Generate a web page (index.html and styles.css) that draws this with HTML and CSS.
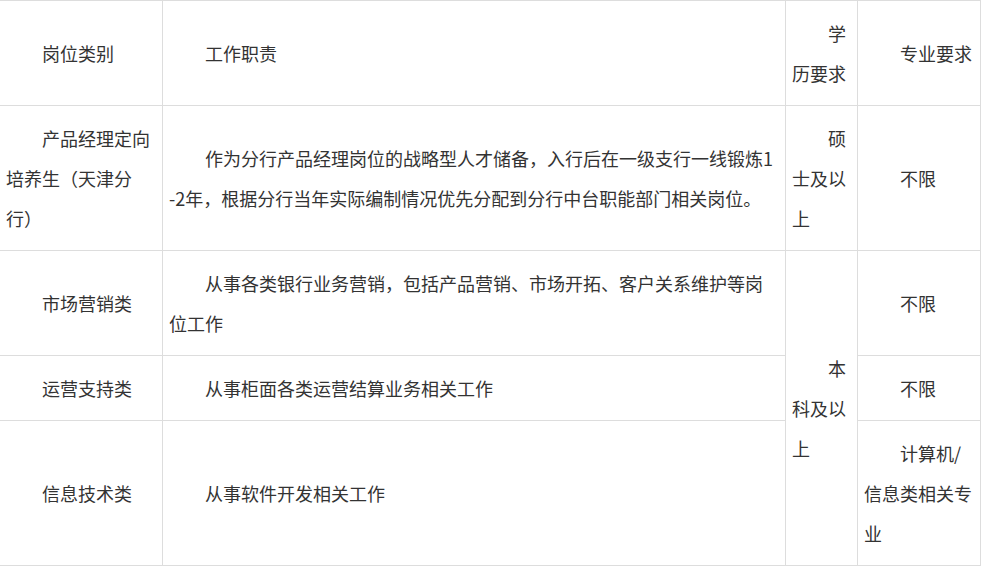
FILE: index.html
```html
<!DOCTYPE html>
<html lang="zh-CN">
<head>
    <meta charset="UTF-8">
    <meta name="viewport" content="width=device-width, initial-scale=1.0">
    <title>岗位信息</title>
    <link rel="stylesheet" href="styles.css">
</head>
<body>
    <table class="job-table">
        <colgroup>
            <col class="col-type">
            <col class="col-duty">
            <col class="col-edu">
            <col class="col-major">
        </colgroup>
        <tr>
            <td><p>岗位类别</p></td>
            <td><p>工作职责</p></td>
            <td><p>学历要求</p></td>
            <td><p>专业要求</p></td>
        </tr>
        <tr>
            <td><p>产品经理定向培养生（天津分行）</p></td>
            <td><p>作为分行产品经理岗位的战略型人才储备，入行后在一级支行一线锻炼1-2年，根据分行当年实际编制情况优先分配到分行中台职能部门相关岗位。</p></td>
            <td><p>硕士及以上</p></td>
            <td><p>不限</p></td>
        </tr>
        <tr>
            <td><p>市场营销类</p></td>
            <td><p>从事各类银行业务营销，包括产品营销、市场开拓、客户关系维护等岗位工作</p></td>
            <td rowspan="3"><p>本科及以上</p></td>
            <td><p>不限</p></td>
        </tr>
        <tr>
            <td><p>运营支持类</p></td>
            <td><p>从事柜面各类运营结算业务相关工作</p></td>
            <td><p>不限</p></td>
        </tr>
        <tr>
            <td><p>信息技术类</p></td>
            <td><p>从事软件开发相关工作</p></td>
            <td><p>计算机/信息类相关专业</p></td>
        </tr>
    </table>
</body>
</html>
```

FILE: styles.css
```css
* {
    margin: 0;
    padding: 0;
    box-sizing: border-box;
}
body {
    background: #fff;
    color: #333;
    font-family: "Noto Sans CJK SC", "Noto Sans", sans-serif;
    font-size: 18px;
    overflow: hidden;
}
.job-table {
    width: 981px;
    margin-left: -1px;
    border-collapse: collapse;
    table-layout: fixed;
}
.col-type {
    width: 163px;
}
.col-duty {
    width: 623px;
}
.col-edu {
    width: 72px;
}
.col-major {
    width: 123px;
}
.job-table td {
    border: 1px solid #ddd;
    padding: 12px 6px;
    vertical-align: middle;
    word-break: break-all;
}
.job-table p {
    line-height: 40px;
    text-indent: 2em;
}
```
